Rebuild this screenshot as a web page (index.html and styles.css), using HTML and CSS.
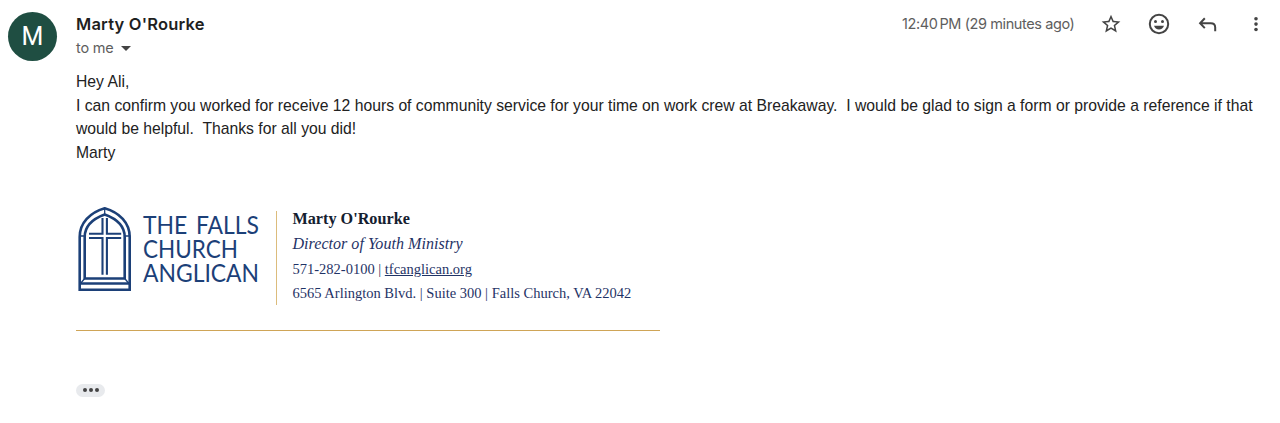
FILE: index.html
```html
<!DOCTYPE html>
<html lang="en">
<head>
  <meta charset="UTF-8">
  <meta name="viewport" content="width=device-width, initial-scale=1.0">
  <title>Marty O'Rourke</title>
  <link rel="stylesheet" href="styles.css">
</head>
<body>
  <div class="message">
    <div class="avatar">M</div>
    <div class="main">
      <header>
        <div class="sender">
          <div class="name">Marty O'Rourke</div>
          <div class="to">to me <span class="arrow"></span></div>
        </div>
        <div class="actions">
          <span class="date">12:40<span class="thin"></span>PM (29 minutes ago)</span>
          <svg class="icon" viewBox="-0.8 -0.8 25.6 25.6"><path d="M22 9.24l-7.19-.62L12 2 9.19 8.63 2 9.24l5.46 4.73L5.82 21 12 17.27 18.18 21l-1.63-7.03L22 9.24zM12 15.4l-3.76 2.27 1-4.28-3.32-2.88 4.38-.38L12 6.1l1.71 4.04 4.38.38-3.32 2.88 1 4.28L12 15.4z"/></svg>
          <svg class="icon" viewBox="0 0 24 24"><circle class="line" cx="12" cy="12" r="9.2"/><circle cx="8.5" cy="9.5" r="1.5"/><circle cx="15.5" cy="9.5" r="1.5"/><path d="M7 13.8h10c-.7 2.3-2.6 3.7-5 3.7s-4.300-1.400-5-3.700z"/></svg>
          <svg class="icon" viewBox="0 0 24 24"><path class="line" d="M8.800 6.200 4.100 11.200l4.700 4.900M4.100 11.200h10.700c2.700 0 4.400 1.700 4.400 4.300v3.700"/></svg>
          <svg class="icon" viewBox="0 0 24 24"><circle cx="12" cy="6.8" r="1.8"/><circle cx="12" cy="12.1" r="1.8"/><circle cx="12" cy="17.5" r="1.8"/></svg>
        </div>
      </header>

      <div class="body">
        <div>Hey Ali,</div>
        <div>I can confirm you worked for receive 12 hours of community service for your time on work crew at Breakaway.&nbsp; I would be glad to sign a form or provide a reference if that<br>would be helpful.&nbsp; Thanks for all you did!</div>
        <div>Marty</div>
      </div>

      <div class="signature">
        <svg class="logo" viewBox="0 0 184 88">
          <g class="window">
            <path d="M3.700 83.800V31C3.700 17 14 6.500 28.700 2.300 43.500 6.500 53.700 17 53.700 31v52.800z"/>
            <path d="M8.700 72.500V31C8.700 21 15 13.500 28.700 8.500 42.500 13.500 48.700 21 48.700 31v41.500z"/>
            <path class="thin-line" d="M3 30h6M48.500 30h6M28.700 2v6M8.700 72.500 4.500 77.500M48.700 72.500l4.200 5"/>
            <path d="M4 77.500h50"/>
          </g>
          <path class="cross" d="M26.500 12v15.800H13M13 32h13.500v36.700M30.900 12v15.800h14.300M45.200 32H30.900v36.700"/>
          <text x="67" y="28" textLength="116" lengthAdjust="spacingAndGlyphs" word-spacing="3">THE FALLS</text>
          <text x="67" y="52" textLength="95" lengthAdjust="spacingAndGlyphs">CHURCH</text>
          <text x="67" y="76" textLength="116" lengthAdjust="spacingAndGlyphs">ANGLICAN</text>
        </svg>
        <div class="contact">
          <div class="contact-name">Marty O'Rourke</div>
          <div class="role">Director of Youth Ministry</div>
          <div class="phone">571-282-0100 | <a href="#">tfcanglican.org</a></div>
          <div class="address">6565 Arlington Blvd. | Suite 300 | Falls Church, VA 22042</div>
        </div>
      </div>

      <div class="more"><i></i><i></i><i></i></div>
    </div>
  </div>
</body>
</html>
```
FILE: styles.css
```css
body { margin: 0; background: #fff; color: #222; font-family: "Liberation Sans", Arial, sans-serif; }
.message { display: flex; gap: 19px; padding: 12px 8px 0; }
.avatar { flex: none; width: 49px; height: 49px; border-radius: 50%; background: #1f4e42; color: #fff; font: 25px/50px Roboto, sans-serif; text-align: center; }
.main { flex: 1; min-width: 0; }

header { display: flex; justify-content: space-between; height: 58px; }
.name { font: 600 16.5px/24px Inter, sans-serif; letter-spacing: 0.2px; color: #1f1f1f; }
.to { display: flex; align-items: center; font: 14.5px/24px Inter, sans-serif; letter-spacing: -0.2px; color: #5e5e5e; }
.arrow { margin-left: 7px; border: 5px solid transparent; border-top-color: #444; border-bottom: 0; }
.actions { display: flex; align-items: center; height: 24px; gap: 24.4px; margin-right: 4px; }
.date { font: 14.5px/24px Inter, sans-serif; letter-spacing: -0.4px; color: #5e5e5e; white-space: nowrap; }
.thin { display: inline-block; width: 2px; }
.icon { width: 24px; height: 24px; fill: #444; }
.icon .line { fill: none; stroke: #444; stroke-width: 2; }

.body { font-size: 15.72px; line-height: 23.7px; white-space: nowrap; }

.signature { display: flex; width: 584px; height: 124px; margin-top: 41px; border-bottom: 1.5px solid #cfa557; }
.logo { flex: none; width: 184px; height: 88px; overflow: visible; }
.logo text { font: 25px Lato, sans-serif; fill: #1c4078; }
.window { fill: none; stroke: #1c4078; stroke-width: 2.6; }
.thin-line { stroke-width: 1.3; }
.cross { fill: none; stroke: #1c4078; stroke-width: 2.1; }
.contact { height: 94px; margin: 5px 0 0 16px; padding-left: 15.5px; border-left: 1px solid #dcbc7c; font-family: "Liberation Serif", "Times New Roman", serif; color: #1f3366; white-space: nowrap; box-sizing: border-box; }
.contact-name { font-size: 16.2px; font-weight: bold; line-height: 17px; color: #14202f; }
.role { font-size: 16.1px; font-style: italic; line-height: 31px; }
.phone { font-size: 14.5px; line-height: 20px; }
.address { font-size: 14.5px; line-height: 28px; }
.contact a { color: inherit; }

.more { display: flex; justify-content: center; align-items: center; gap: 2px; width: 29px; height: 13px; margin-top: 53px; border-radius: 7px; background: #e8eaed; }
.more i { width: 4px; height: 4px; border-radius: 50%; background: #444; }
```
